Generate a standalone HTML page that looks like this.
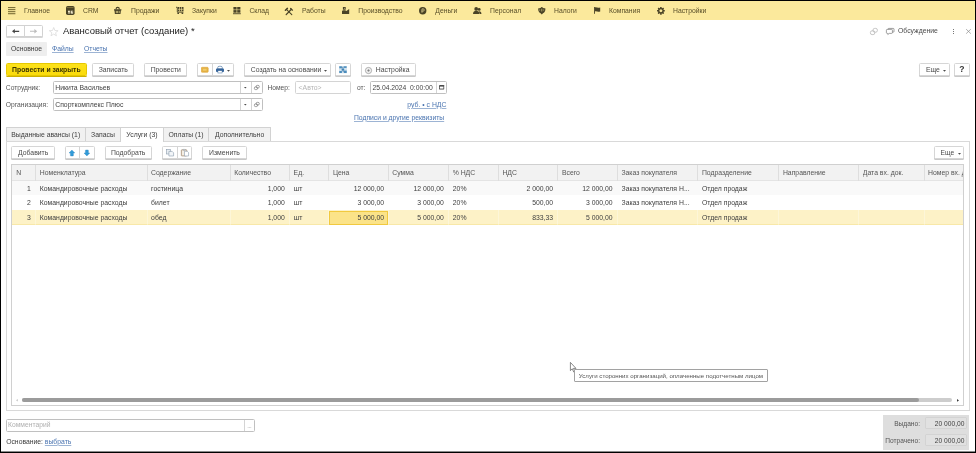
<!DOCTYPE html>
<html lang="ru">
<head>
<meta charset="utf-8">
<title>Авансовый отчет (создание)</title>
<style>
*{box-sizing:border-box;margin:0;padding:0}
html,body{width:976px;height:453px;overflow:hidden;background:#fff}
body{position:relative;font-family:"Liberation Sans",sans-serif;font-size:6.85px;color:#404040;line-height:1}
.a{position:absolute;white-space:nowrap}
svg{position:absolute;overflow:visible}
.frame{left:0;top:0;width:976px;height:453px;border-style:solid;border-color:#000;border-width:1px 1px 1.6px 1.3px;z-index:50}
.topbar{left:1px;top:1px;width:974px;height:19.2px;background:#fbe99c}
.mi{top:7.6px;color:#584e28;font-size:6.8px}
.btn{height:13px;border:1px solid #d6d6d6;border-radius:1.5px;background:#fff;box-shadow:0 1px 0 #c8c8c8;text-align:center;line-height:11px;color:#4a4a4a}
.inp{height:13.2px;border:1px solid #c0c0c0;border-radius:1.5px;background:#fff;line-height:11.4px;padding-left:1.2px;color:#444}
.lnk{color:#4a74b0;text-decoration:underline;text-decoration-color:#9db4d4;text-underline-offset:1.4px;text-decoration-thickness:0.8px}
.lbl{color:#555;font-size:6.7px}
.tab{top:127.3px;height:14px;border:1px solid #d2d2d2;border-bottom:none;background:#f1f1f1;line-height:13px;text-align:center;color:#404040}
.th{top:165px;height:16px;line-height:16px;color:#555;font-size:6.85px}
.td{height:14px;line-height:14px;color:#404040;overflow:hidden;font-size:6.85px}
.vd{top:165px;width:1px;height:16px;background:#dedede}
.r{text-align:right}
.dv{width:1px;background:#d4d4d4}
</style>
</head>
<body><div id="root" style="position:absolute;left:0;top:0;width:976px;height:453px;will-change:transform">
<div class="a topbar"></div>
<div class="a mi" style="left:24px">Главное</div>
<div class="a mi" style="left:83px">CRM</div>
<div class="a mi" style="left:131px">Продажи</div>
<div class="a mi" style="left:192px">Закупки</div>
<div class="a mi" style="left:249.4px">Склад</div>
<div class="a mi" style="left:302px">Работы</div>
<div class="a mi" style="left:358.3px">Производство</div>
<div class="a mi" style="left:435.3px">Деньги</div>
<div class="a mi" style="left:490px">Персонал</div>
<div class="a mi" style="left:554px">Налоги</div>
<div class="a mi" style="left:609px">Компания</div>
<div class="a mi" style="left:673px">Настройки</div>
<svg style="left:8px;top:7.2px" width="7.4" height="7.4" viewBox="0 0 7.4 7.4"><g fill="#7d7038"><rect y="0" width="7.4" height="1.1"/><rect y="2.05" width="7.4" height="1.1"/><rect y="4.1" width="7.4" height="1.1"/><rect y="6.15" width="7.4" height="1.1"/></g></svg>
<svg style="left:66.2px;top:6px" width="8.6" height="8.9" viewBox="0 0 8.6 8.9"><rect x="0" y="0" width="8.6" height="8.9" rx="1.7" fill="#4a4326"/><rect x="0.9" y="0.9" width="6.8" height="0.9" rx="0.3" fill="#8d7f47"/><rect x="2" y="4.7" width="1.9" height="2.9" fill="#f3ecd0"/><rect x="4.7" y="4.7" width="2.4" height="2.9" fill="#f3ecd0"/><rect x="2.6" y="6" width="0.7" height="1.6" fill="#4a4326"/><rect x="5.9" y="4.7" width="0.6" height="1.8" fill="#4a4326"/></svg>
<svg style="left:114.4px;top:7.4px" width="7.4" height="6.9" viewBox="0 0 7.4 6.9"><path d="M2.1 2.4V1.9A1.6 1.5 0 0 1 5.3 1.9V2.4" fill="none" stroke="#4a4326" stroke-width="1.1"/><path d="M0 2.2H7.4V3.4H6.9L6.5 6.9H0.9L0.5 3.4H0Z" fill="#4a4326"/><rect x="1.9" y="3.9" width="0.7" height="2.2" fill="#e8d98f"/><rect x="3.35" y="3.9" width="0.7" height="2.2" fill="#e8d98f"/><rect x="4.8" y="3.9" width="0.7" height="2.2" fill="#e8d98f"/></svg>
<svg style="left:176px;top:7.2px" width="7.6" height="7" viewBox="0 0 7.6 7"><path d="M0 0.3H1.3V5.2H7.4" fill="none" stroke="#4a4326" stroke-width="0.9"/><rect x="1.9" y="0" width="5.6" height="4.3" fill="#4a4326"/><rect x="3.4" y="0" width="0.6" height="4.3" fill="#fbe99c"/><rect x="5.4" y="0" width="0.6" height="4.3" fill="#fbe99c"/><rect x="1.9" y="1.9" width="5.6" height="0.6" fill="#fbe99c"/><rect x="1.4" y="5.6" width="1.6" height="1.4" fill="#4a4326"/><rect x="5.6" y="5.6" width="1.6" height="1.4" fill="#4a4326"/></svg>
<svg style="left:233px;top:7.2px" width="7.8" height="7.2" viewBox="0 0 7.8 7.2"><g fill="#4a4326"><rect x="0.4" y="0" width="3.2" height="2.6"/><rect x="4.2" y="0" width="3.2" height="2.6"/><rect x="0.4" y="3.1" width="3.2" height="2.6"/><rect x="4.2" y="3.1" width="3.2" height="2.6"/><rect x="0" y="6.3" width="7.8" height="0.9"/></g></svg>
<svg style="left:285.3px;top:7.6px" width="8.4" height="6.8" viewBox="0 0 8.4 6.8"><g stroke="#4a4326" fill="none" stroke-linecap="round"><path d="M1.2 6.6L6.4 1.2" stroke-width="1.3"/><path d="M1.4 1.4L6.8 6.6" stroke-width="1.1"/><path d="M0.4 2.2L2.4 0.4" stroke-width="1.5"/><path d="M5.6 0.5L7.5 2.2" stroke-width="1.2"/></g></svg>
<svg style="left:342px;top:7px" width="7.2" height="6.9" viewBox="0 0 7.2 6.9"><path d="M0 6.9V4L1 3.2H3.2L4.4 4L7.2 1.9V6.9Z" fill="#4a4326"/><rect x="0.9" y="0" width="2.8" height="2.7" fill="#4a4326"/><rect x="2" y="0.9" width="0.7" height="0.9" fill="#d9cc8a"/></svg>
<svg style="left:419px;top:7px" width="7.4" height="7.4" viewBox="0 0 7.4 7.4"><circle cx="3.7" cy="3.7" r="3.7" fill="#4a4326"/><path d="M3 5.8V1.9H4.2A1.1 1.1 0 0 1 4.2 4.1H2.4" fill="none" stroke="#d9cc90" stroke-width="0.8"/></svg>
<svg style="left:473px;top:7px" width="8.4" height="7" viewBox="0 0 8.4 7"><g fill="#4a4326"><circle cx="3.2" cy="1.9" r="1.9"/><path d="M0 7C0 4.6 1.4 3.8 3.2 3.8S6.4 4.6 6.4 7Z"/><circle cx="6.2" cy="2.4" r="1.4"/><path d="M5.6 4.2C7.6 4 8.4 5 8.4 7H6.8Z"/></g></svg>
<svg style="left:537.8px;top:6.9px" width="7.6" height="7.4" viewBox="0 0 7.6 7.4"><path d="M0.3 1.2C1.4 1.6 2.6 1 3.2 0.3L3.8 0L4.4 0.3C5 1 6.2 1.6 7.3 1.2C7.7 3.6 6.8 5.4 5 6.2L3.8 7.4L2.6 6.2C0.8 5.4 -0.1 3.6 0.3 1.2Z" fill="#4a4326"/><rect x="3.35" y="1.7" width="0.9" height="2.8" fill="#b9ad73"/><rect x="1.5" y="2.3" width="0.6" height="1.6" fill="#b9ad73"/><rect x="5.5" y="2.3" width="0.6" height="1.6" fill="#b9ad73"/></svg>
<svg style="left:593.9px;top:6.9px" width="6.4" height="6.8" viewBox="0 0 6.4 6.8"><rect x="0" y="0" width="0.9" height="6.8" fill="#4a4326"/><path d="M0.9 0.5C2.4 -0.2 3.4 1.3 6.2 0.4V4.4C3.4 5.3 2.4 3.8 0.9 4.6Z" fill="#4a4326"/></svg>
<svg style="left:657px;top:7px" width="7.8" height="7.6" viewBox="0 0 7.8 7.6"><g fill="#4a4326"><rect x="3.1" y="-0.1" width="1.6" height="7.8" rx="0.3" transform="rotate(0 3.9 3.8)"/><rect x="3.1" y="-0.1" width="1.6" height="7.8" rx="0.3" transform="rotate(45 3.9 3.8)"/><rect x="3.1" y="-0.1" width="1.6" height="7.8" rx="0.3" transform="rotate(90 3.9 3.8)"/><rect x="3.1" y="-0.1" width="1.6" height="7.8" rx="0.3" transform="rotate(135 3.9 3.8)"/><circle cx="3.9" cy="3.8" r="2.8"/></g><circle cx="3.9" cy="3.8" r="1.5" fill="#fbe99c"/></svg>
<div class="a btn" style="left:5.7px;top:25px;width:37.5px;height:12.3px;border-color:#d2d2d2;box-shadow:0 1px 0 #d6d6d6"></div>
<div class="a dv" style="left:24px;top:26px;height:10.5px"></div>
<svg style="left:11.9px;top:29.2px" width="7.2" height="4.6" viewBox="0 0 7.2 4.6"><path d="M0 2.3L2.8 0V1.7H7.2V2.9H2.8V4.6Z" fill="#454545"/></svg>
<svg style="left:30px;top:29.2px" width="7.2" height="4.6" viewBox="0 0 7.2 4.6"><path d="M7.2 2.3L4.4 0V1.8H0V2.8H4.4V4.6Z" fill="#bdbdbd"/></svg>
<svg style="left:49.4px;top:26.6px" width="9.4" height="9.4" viewBox="0 0 9.4 9.4"><path d="M4.7 0.5L5.9 3.5L9.1 3.7L6.6 5.7L7.4 8.8L4.7 7.1L2 8.8L2.8 5.7L0.3 3.7L3.5 3.5Z" fill="#fff" stroke="#d6d6d6" stroke-width="0.7" stroke-linejoin="round"/></svg>
<div class="a" style="left:63px;top:25px;font-size:9.5px;color:#1c1c1c;line-height:12px">Авансовый отчет (создание) *</div>
<svg style="left:870px;top:28px" width="7.8" height="7" viewBox="0 0 7.8 7"><g fill="none" stroke="#b8b8b8" stroke-width="0.8"><rect x="0.4" y="2.8" width="4.4" height="3.8" rx="1.7"/><rect x="3" y="0.4" width="4.4" height="3.8" rx="1.7"/></g></svg>
<svg style="left:886.4px;top:28px" width="8.4" height="6.6" viewBox="0 0 8.4 6.6"><g fill="#fff" stroke="#777" stroke-width="0.7"><rect x="2" y="0.4" width="6" height="3.8" rx="0.8"/><path d="M0.4 2.2A0.8 0.8 0 0 1 1.2 1.4H5.6A0.8 0.8 0 0 1 6.4 2.2V4.6A0.8 0.8 0 0 1 5.6 5.4H3.2L1.8 6.5V5.4H1.2A0.8 0.8 0 0 1 0.4 4.6Z"/></g></svg>
<div class="a" style="left:898px;top:27.6px;color:#4a4a4a;font-size:6.85px">Обсуждение</div>
<div class="a" style="left:953px;top:28.5px;width:1px;height:1.1px;background:#777"></div><div class="a" style="left:953px;top:30.6px;width:1px;height:1.1px;background:#777"></div><div class="a" style="left:953px;top:32.7px;width:1px;height:1.1px;background:#777"></div>
<svg style="left:966px;top:29px" width="5" height="4.8" viewBox="0 0 5 4.8"><path d="M0.2 0.2L4.8 4.6M4.8 0.2L0.2 4.6" stroke="#8a8a8a" stroke-width="0.7" fill="none"/></svg>
<div class="a" style="left:5.7px;top:42px;width:41px;height:13.8px;background:#eeeeee;border-radius:1px"></div>
<div class="a" style="left:11px;top:45.6px;color:#3a3a3a;font-size:6.8px">Основное</div>
<div class="a lnk" style="left:52px;top:45.6px;font-size:6.8px">Файлы</div>
<div class="a lnk" style="left:84px;top:45.6px;font-size:6.8px">Отчеты</div>
<div class="a btn" style="left:5.7px;top:63px;width:81.4px;background:linear-gradient(#fde21a,#fadb0c);border-color:#e6c800;box-shadow:0 1px 0 #cdb000;font-weight:bold;color:#3c3400">Провести и закрыть</div>
<div class="a btn" style="left:92.3px;top:63px;width:42px">Записать</div>
<div class="a btn" style="left:144.4px;top:63px;width:42.8px">Провести</div>
<div class="a btn" style="left:197.4px;top:63px;width:36.2px"></div>
<div class="a dv" style="left:212.2px;top:64px;height:11px"></div>
<svg style="left:227.2px;top:69.8px" width="3" height="1.7" viewBox="0 0 3 1.7"><path d="M0 0H3L1.5 1.7Z" fill="#4a4a4a"/></svg>
<div class="a btn" style="left:244px;top:63px;width:86.5px;text-align:left;padding-left:5.8px;font-size:6.8px">Создать на основании</div>
<svg style="left:324.2px;top:69.8px" width="3" height="1.7" viewBox="0 0 3 1.7"><path d="M0 0H3L1.5 1.7Z" fill="#4a4a4a"/></svg>
<div class="a btn" style="left:335.2px;top:63px;width:15.4px"></div>
<div class="a btn" style="left:361px;top:63px;width:54.6px;text-align:left;padding-left:13.8px">Настройка</div>
<div class="a btn" style="left:919.4px;top:63px;width:30.4px;text-align:left;padding-left:5.6px">Еще</div>
<svg style="left:942.8px;top:69.6px" width="3" height="1.7" viewBox="0 0 3 1.7"><path d="M0 0H3L1.5 1.7Z" fill="#4a4a4a"/></svg>
<div class="a btn" style="left:954px;top:63px;width:15.6px;font-weight:bold;font-size:8.6px;line-height:11.4px;color:#333">?</div>
<svg style="left:201.3px;top:66.9px" width="7.5" height="5.6" viewBox="0 0 7.5 5.6"><rect x="0.3" y="0.3" width="6.9" height="5" rx="0.9" fill="#e9b548" stroke="#dba238" stroke-width="0.6"/><rect x="1.6" y="1.6" width="4.3" height="2.4" rx="0.4" fill="#f3cf6c" stroke="#d9a53a" stroke-width="0.4"/></svg>
<svg style="left:216px;top:66.2px" width="8" height="7.2" viewBox="0 0 8 7.2"><path d="M1.7 3V1.6A1.4 1.4 0 0 1 3.1 0.3H4.9A1.4 1.4 0 0 1 6.3 1.6V3Z" fill="#fff" stroke="#3b6a9c" stroke-width="0.6"/><rect x="0" y="2.5" width="8" height="3.5" rx="0.9" fill="#33629a"/><rect x="1.9" y="4.7" width="4.2" height="2.3" fill="#fff" stroke="#3b6a9c" stroke-width="0.5"/></svg>
<svg style="left:339px;top:66.3px" width="8" height="7.3" viewBox="0 0 8 7.3"><rect x="0" y="0" width="8" height="7.3" fill="#d3e4ef"/><g fill="#4b8cbc"><rect x="0.3" y="0.3" width="2.6" height="2"/><rect x="4.6" y="0.3" width="3" height="1.6"/><rect x="2.6" y="2.6" width="2.6" height="2"/><rect x="0.3" y="5" width="2.6" height="2"/><rect x="5" y="4.6" width="2.7" height="2.4"/></g><path d="M2.9 1.3H4V5.8H5" stroke="#2f6a9a" stroke-width="0.5" fill="none"/></svg>
<svg style="left:364.9px;top:66.7px" width="7" height="7" viewBox="0 0 7 7"><circle cx="3.5" cy="3.5" r="3.1" fill="#fff" stroke="#8a8a8a" stroke-width="0.7"/><circle cx="3.5" cy="3.5" r="1.7" fill="none" stroke="#b5b5b5" stroke-width="0.4"/><path d="M2.2 3.5H4.8M3.5 2.2V4.8" stroke="#777" stroke-width="0.7"/></svg>
<div class="a lbl" style="left:5.8px;top:84.6px">Сотрудник:</div>
<div class="a inp" style="left:53px;top:81px;width:209.5px">Никита Васильев</div>
<div class="a dv" style="left:240.4px;top:82px;height:11.2px"></div><div class="a dv" style="left:251.2px;top:82px;height:11.2px"></div>
<svg style="left:244.4px;top:86.8px" width="2.6" height="1.5" viewBox="0 0 2.6 1.5"><path d="M0 0H2.6L1.3 1.5Z" fill="#4a4a4a"/></svg>
<div class="a lbl" style="left:267.4px;top:84.6px">Номер:</div>
<div class="a inp" style="left:295px;top:81px;width:56px;color:#b4b4b4;border-color:#d4d4d4;padding-left:2.6px">&lt;Авто&gt;</div>
<div class="a lbl" style="left:357px;top:84.6px">от:</div>
<div class="a inp" style="left:370.3px;top:81px;width:76.7px;padding-left:1.2px;white-space:pre;font-size:6.78px">25.04.2024  0:00:00</div>
<div class="a dv" style="left:436.4px;top:82px;height:11.2px"></div>
<div class="a lbl" style="left:5.8px;top:101.6px">Организация:</div>
<div class="a inp" style="left:53px;top:98px;width:209.5px">Спорткомплекс Плюс</div>
<div class="a dv" style="left:240.4px;top:99px;height:11.2px"></div><div class="a dv" style="left:251.2px;top:99px;height:11.2px"></div>
<svg style="left:244.4px;top:103.8px" width="2.6" height="1.5" viewBox="0 0 2.6 1.5"><path d="M0 0H2.6L1.3 1.5Z" fill="#4a4a4a"/></svg>
<div class="a lnk" style="right:529.6px;top:101.6px">руб. • с НДС</div>
<div class="a lnk" style="left:354px;top:114.6px;font-size:6.78px">Подписи и другие реквизиты</div>
<svg style="left:254.4px;top:85.1px" width="5.6" height="5" viewBox="0 0 5.6 5"><g fill="none" stroke="#6e6e6e" stroke-width="0.65"><rect x="0.35" y="1.9" width="3.2" height="2.7" rx="1.2"/><rect x="2.1" y="0.35" width="3.2" height="2.7" rx="1.2"/></g></svg>
<svg style="left:254.4px;top:102.1px" width="5.6" height="5" viewBox="0 0 5.6 5"><g fill="none" stroke="#6e6e6e" stroke-width="0.65"><rect x="0.35" y="1.9" width="3.2" height="2.7" rx="1.2"/><rect x="2.1" y="0.35" width="3.2" height="2.7" rx="1.2"/></g></svg>
<svg style="left:438.6px;top:85.2px" width="5.2" height="4.4" viewBox="0 0 5.2 4.4"><rect x="0" y="0" width="5.2" height="4.4" rx="0.5" fill="#4a4a4a"/><rect x="0.8" y="1.6" width="3.6" height="2" fill="#fff"/></svg>
<div class="a" style="left:5.7px;top:140.6px;width:964.2px;height:270px;border:1px solid #d9d9d9"></div>
<div class="a tab" style="left:5.7px;width:80px">Выданные авансы (1)</div>
<div class="a tab" style="left:85.2px;width:35.6px">Запасы</div>
<div class="a tab" style="left:120.3px;width:43.4px;background:#fff;height:15px">Услуги (3)</div>
<div class="a tab" style="left:163.2px;width:45.6px">Оплаты (1)</div>
<div class="a tab" style="left:208.3px;width:62.6px">Дополнительно</div>
<div class="a btn" style="left:11.2px;top:146px;width:44px">Добавить</div>
<div class="a btn" style="left:64.6px;top:146px;width:30px"></div>
<div class="a dv" style="left:79.2px;top:147px;height:11px"></div>
<div class="a btn" style="left:104.7px;top:146px;width:47px">Подобрать</div>
<div class="a btn" style="left:162px;top:146px;width:30.4px"></div>
<div class="a dv" style="left:176.8px;top:147px;height:11px"></div>
<div class="a btn" style="left:202.3px;top:146px;width:44.4px">Изменить</div>
<div class="a btn" style="left:933.6px;top:146px;width:30px;text-align:left;padding-left:6px;font-size:6.7px">Еще</div>
<svg style="left:958.4px;top:153.0px" width="3" height="1.7" viewBox="0 0 3 1.7"><path d="M0 0H3L1.5 1.7Z" fill="#4a4a4a"/></svg>
<svg style="left:69.2px;top:150px" width="5.8" height="6" viewBox="0 0 5.8 6"><path d="M2.9 0L5.8 3H4.4V5.6A0.4 0.4 0 0 1 4 6H1.8A0.4 0.4 0 0 1 1.4 5.6V3H0Z" fill="#319bd8" stroke="#2b82bc" stroke-width="0.35"/></svg>
<svg style="left:84.2px;top:150px" width="5.8" height="6" viewBox="0 0 5.8 6"><path d="M2.9 6L5.8 3H4.4V0.4A0.4 0.4 0 0 0 4 0H1.8A0.4 0.4 0 0 0 1.4 0.4V3H0Z" fill="#319bd8" stroke="#2b82bc" stroke-width="0.35"/></svg>
<svg style="left:166px;top:149px" width="7.9" height="7.3" viewBox="0 0 7.9 7.3"><g stroke="#8c9cac" stroke-width="0.6"><rect x="0.3" y="0.3" width="4" height="4.7" fill="#e9eef3"/><path d="M2.9 2.4H6.2L7.6 3.8V7H2.9Z" fill="#f2f5f8"/></g></svg>
<svg style="left:181px;top:149px" width="7.9" height="7.3" viewBox="0 0 7.9 7.3"><rect x="0.35" y="0.8" width="5.4" height="6.1" rx="0.5" fill="#f4eee4" stroke="#9a7d60" stroke-width="0.7"/><rect x="2" y="0.1" width="2.2" height="1.3" fill="#c9ccd0" stroke="#8c96a0" stroke-width="0.3"/><path d="M3.5 2.3H6.3L7.6 3.6V7H3.5Z" fill="#fff" stroke="#8c9cac" stroke-width="0.6"/></svg>
<div class="a" style="left:11.2px;top:164.3px;width:952.8px;height:241.4px;border:1px solid #d0d0d0"></div>
<div class="a" style="left:12.2px;top:165px;width:950.8px;height:16px;background:#f2f2f2;border-bottom:1px solid #e4e4e4"></div>
<div class="a" style="left:12.2px;top:181px;width:950.8px;height:14.4px;background:#f9f9f9"></div>
<div class="a" style="left:12.2px;top:210.1px;width:950.8px;height:14.9px;background:#fdf2c7;border-bottom:1px solid #f8e8a8"></div>
<div class="a" style="left:328.7px;top:211px;width:59.4px;height:13.6px;background:#fbe389;border:1px solid #f1c93f"></div>
<div class="a th" style="left:16.2px;width:18.8px;overflow:hidden">N</div>
<div class="a vd" style="left:35.2px"></div>
<div class="a" style="left:35.2px;top:210px;width:1px;height:15px;background:rgba(255,255,255,0.3)"></div>
<div class="a th" style="left:39.7px;width:106.6px;overflow:hidden">Номенклатура</div>
<div class="a vd" style="left:146.5px"></div>
<div class="a" style="left:146.5px;top:210px;width:1px;height:15px;background:rgba(255,255,255,0.3)"></div>
<div class="a th" style="left:151.0px;width:78.5px;overflow:hidden">Содержание</div>
<div class="a vd" style="left:229.7px"></div>
<div class="a" style="left:229.7px;top:210px;width:1px;height:15px;background:rgba(255,255,255,0.3)"></div>
<div class="a th" style="left:234.2px;width:54.7px;overflow:hidden">Количество</div>
<div class="a vd" style="left:289.1px"></div>
<div class="a" style="left:289.1px;top:210px;width:1px;height:15px;background:rgba(255,255,255,0.3)"></div>
<div class="a th" style="left:293.6px;width:34.6px;overflow:hidden">Ед.</div>
<div class="a vd" style="left:328.4px"></div>
<div class="a" style="left:328.4px;top:210px;width:1px;height:15px;background:rgba(255,255,255,0.3)"></div>
<div class="a th" style="left:332.9px;width:54.6px;overflow:hidden">Цена</div>
<div class="a vd" style="left:387.7px"></div>
<div class="a" style="left:387.7px;top:210px;width:1px;height:15px;background:rgba(255,255,255,0.3)"></div>
<div class="a th" style="left:392.2px;width:55.8px;overflow:hidden">Сумма</div>
<div class="a vd" style="left:448.2px"></div>
<div class="a" style="left:448.2px;top:210px;width:1px;height:15px;background:rgba(255,255,255,0.3)"></div>
<div class="a th" style="left:452.7px;width:45.0px;overflow:hidden">% НДС</div>
<div class="a vd" style="left:497.9px"></div>
<div class="a" style="left:497.9px;top:210px;width:1px;height:15px;background:rgba(255,255,255,0.3)"></div>
<div class="a th" style="left:502.4px;width:54.8px;overflow:hidden">НДС</div>
<div class="a vd" style="left:557.4px"></div>
<div class="a" style="left:557.4px;top:210px;width:1px;height:15px;background:rgba(255,255,255,0.3)"></div>
<div class="a th" style="left:561.9px;width:54.8px;overflow:hidden">Всего</div>
<div class="a vd" style="left:616.9px"></div>
<div class="a" style="left:616.9px;top:210px;width:1px;height:15px;background:rgba(255,255,255,0.3)"></div>
<div class="a th" style="left:621.4px;width:75.8px;overflow:hidden">Заказ покупателя</div>
<div class="a vd" style="left:697.4px"></div>
<div class="a" style="left:697.4px;top:210px;width:1px;height:15px;background:rgba(255,255,255,0.3)"></div>
<div class="a th" style="left:701.9px;width:76.3px;overflow:hidden">Подразделение</div>
<div class="a vd" style="left:778.4px"></div>
<div class="a" style="left:778.4px;top:210px;width:1px;height:15px;background:rgba(255,255,255,0.3)"></div>
<div class="a th" style="left:782.9px;width:75.2px;overflow:hidden">Направление</div>
<div class="a vd" style="left:858.3px"></div>
<div class="a" style="left:858.3px;top:210px;width:1px;height:15px;background:rgba(255,255,255,0.3)"></div>
<div class="a th" style="left:862.8px;width:60.5px;overflow:hidden">Дата вх. док.</div>
<div class="a vd" style="left:923.5px"></div>
<div class="a" style="left:923.5px;top:210px;width:1px;height:15px;background:rgba(255,255,255,0.3)"></div>
<div class="a th" style="left:928.0px;width:35.3px;overflow:hidden">Номер вх. док.</div>
<div class="a td r" style="left:11.7px;width:19.2px;top:181.8px">1</div>
<div class="a td" style="left:39.8px;width:106.3px;top:181.8px">Командировочные расходы</div>
<div class="a td" style="left:151.1px;width:78.2px;top:181.8px">гостиница</div>
<div class="a td r" style="left:229.7px;width:55.1px;top:181.8px">1,000</div>
<div class="a td" style="left:293.7px;width:34.3px;top:181.8px">шт</div>
<div class="a td r" style="left:328.4px;width:55.7px;top:181.8px">12 000,00</div>
<div class="a td r" style="left:387.7px;width:56.2px;top:181.8px">12 000,00</div>
<div class="a td" style="left:452.8px;width:44.7px;top:181.8px">20%</div>
<div class="a td r" style="left:497.9px;width:55.2px;top:181.8px">2 000,00</div>
<div class="a td r" style="left:557.4px;width:55.2px;top:181.8px">12 000,00</div>
<div class="a td" style="left:621.5px;width:75.5px;top:181.8px">Заказ покупателя Н...</div>
<div class="a td" style="left:702.0px;width:76.0px;top:181.8px">Отдел продаж</div>
<div class="a td r" style="left:11.7px;width:19.2px;top:196.4px">2</div>
<div class="a td" style="left:39.8px;width:106.3px;top:196.4px">Командировочные расходы</div>
<div class="a td" style="left:151.1px;width:78.2px;top:196.4px">билет</div>
<div class="a td r" style="left:229.7px;width:55.1px;top:196.4px">1,000</div>
<div class="a td" style="left:293.7px;width:34.3px;top:196.4px">шт</div>
<div class="a td r" style="left:328.4px;width:55.7px;top:196.4px">3 000,00</div>
<div class="a td r" style="left:387.7px;width:56.2px;top:196.4px">3 000,00</div>
<div class="a td" style="left:452.8px;width:44.7px;top:196.4px">20%</div>
<div class="a td r" style="left:497.9px;width:55.2px;top:196.4px">500,00</div>
<div class="a td r" style="left:557.4px;width:55.2px;top:196.4px">3 000,00</div>
<div class="a td" style="left:621.5px;width:75.5px;top:196.4px">Заказ покупателя Н...</div>
<div class="a td" style="left:702.0px;width:76.0px;top:196.4px">Отдел продаж</div>
<div class="a td r" style="left:11.7px;width:19.2px;top:211.1px">3</div>
<div class="a td" style="left:39.8px;width:106.3px;top:211.1px">Командировочные расходы</div>
<div class="a td" style="left:151.1px;width:78.2px;top:211.1px">обед</div>
<div class="a td r" style="left:229.7px;width:55.1px;top:211.1px">1,000</div>
<div class="a td" style="left:293.7px;width:34.3px;top:211.1px">шт</div>
<div class="a td r" style="left:328.4px;width:55.7px;top:211.1px">5 000,00</div>
<div class="a td r" style="left:387.7px;width:56.2px;top:211.1px">5 000,00</div>
<div class="a td" style="left:452.8px;width:44.7px;top:211.1px">20%</div>
<div class="a td r" style="left:497.9px;width:55.2px;top:211.1px">833,33</div>
<div class="a td r" style="left:557.4px;width:55.2px;top:211.1px">5 000,00</div>
<div class="a td" style="left:702.0px;width:76.0px;top:211.1px">Отдел продаж</div>
<svg style="left:569.6px;top:361.6px" width="6.4" height="10.4" viewBox="0 0 6.4 10.4"><path d="M0.4 0.4V8.6L2.3 6.8L3.7 10L4.9 9.5L3.5 6.4H6Z" fill="#fff" stroke="#555" stroke-width="0.7" stroke-linejoin="round"/></svg>

<!-- scrollbar -->
<div class="a" style="left:22px;top:397.8px;width:930px;height:4.2px;background:#cdcdcd;border-radius:2.1px"></div>
<div class="a" style="left:22px;top:397.8px;width:896.6px;height:4.2px;background:#9b9b9b;border-radius:2.1px"></div>
<svg style="left:16.4px;top:398.6px" width="1.8" height="2.6" viewBox="0 0 1.8 2.6"><path d="M1.8 0V2.6L0 1.3Z" fill="#c4c4c4"/></svg>
<svg style="left:957px;top:398.5px" width="2" height="2.8" viewBox="0 0 2 2.8"><path d="M0 0V2.8L2 1.4Z" fill="#3a3a3a"/></svg>

<!-- tooltip -->
<div class="a" style="left:574px;top:369.3px;width:194.4px;height:12.8px;border:1px solid #a2a2a2;border-radius:1px;background:#fff;font-size:6.14px;line-height:11px;padding-left:3.8px;color:#555">Услуги сторонних организаций, оплаченные подотчетным лицом</div>


<!-- bottom -->
<div class="a inp" style="left:5.7px;top:419.2px;width:249.8px;height:12.6px;color:#b0b0b0;line-height:10.4px;padding-left:1.4px;font-size:6.72px">Комментарий</div>
<div class="a dv" style="left:244px;top:420.2px;height:10.6px"></div>
<div class="a" style="left:247.3px;top:422.6px;font-size:6px;color:#808080;letter-spacing:-0.3px">...</div>
<div class="a lbl" style="left:6.2px;top:438.6px;color:#3a3a3a;font-size:6.8px">Основание: <span class="lnk">выбрать</span></div>
<div class="a" style="left:883px;top:414.8px;width:86.4px;height:35px;background:#dedede"></div>
<div class="a" style="left:925.4px;top:417.4px;width:41.2px;height:12px;background:#e1e1e1;border:1px solid #d3d3d3;border-radius:1px"></div>
<div class="a" style="left:925.4px;top:434.4px;width:41.2px;height:12px;background:#e1e1e1;border:1px solid #d3d3d3;border-radius:1px"></div>
<div class="a lbl r" style="right:56px;top:421px;font-size:6.6px">Выдано:</div>
<div class="a lbl r" style="right:56px;top:438.4px;font-size:6.6px">Потрачено:</div>
<div class="a r" style="right:11.6px;top:421px;font-size:6.65px">20 000,00</div>
<div class="a r" style="right:11.6px;top:438.4px;font-size:6.65px">20 000,00</div>

<div class="a" style="left:1px;top:451px;width:974px;height:1px;background:#8a8a8a;z-index:49"></div>
<div class="a frame"></div>
</div>
</body>
</html>
